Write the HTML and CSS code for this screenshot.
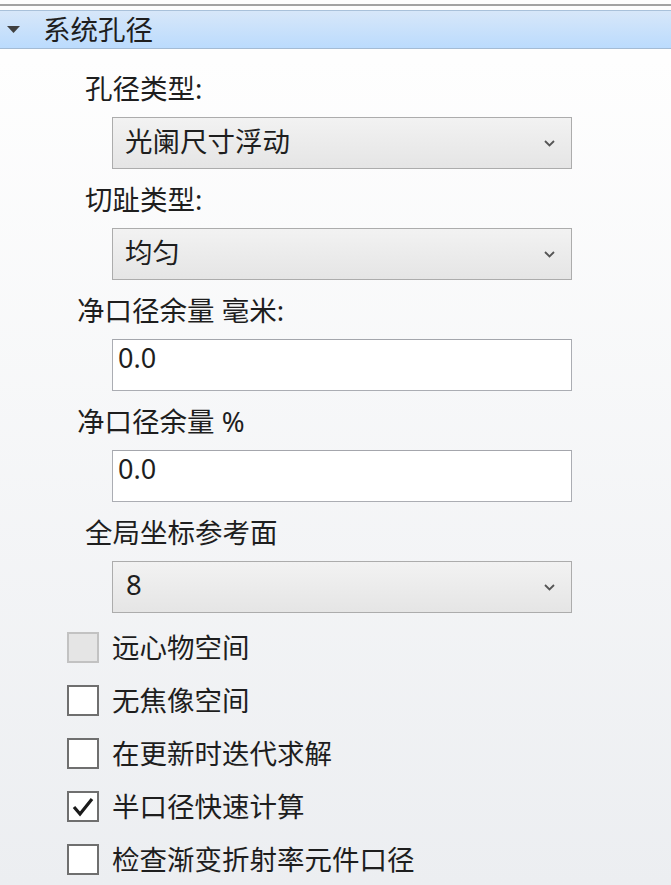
FILE: index.html
```html
<!DOCTYPE html>
<html lang="zh-CN">
<head>
  <meta charset="UTF-8">
  <meta name="viewport" content="width=device-width, initial-scale=1.0">
  <title>系统孔径</title>
  <link rel="stylesheet" href="styles.css">
</head>
<body>

  <div class="panel">
    <div class="rule"></div>

    <div class="section-head">
      <svg class="caret" width="13" height="7" viewBox="0 0 13 7"><path d="M0 0 H13 L6.5 7 Z" fill="#404040"/></svg>
      <span class="section-title">系统孔径</span>
    </div>

    <div class="fields">
      <div class="field">
        <div class="field-label indent">孔径类型:</div>
        <div class="dropdown">
          <span class="dropdown-text">光阑尺寸浮动</span>
          <svg class="chevron" width="11" height="7" viewBox="0 0 11 7"><path d="M1 1 L5.5 5.5 L10 1" fill="none" stroke="#555" stroke-width="1.8"/></svg>
        </div>
      </div>

      <div class="field">
        <div class="field-label indent">切趾类型:</div>
        <div class="dropdown">
          <span class="dropdown-text">均匀</span>
          <svg class="chevron" width="11" height="7" viewBox="0 0 11 7"><path d="M1 1 L5.5 5.5 L10 1" fill="none" stroke="#555" stroke-width="1.8"/></svg>
        </div>
      </div>

      <div class="field">
        <div class="field-label">净口径余量 毫米:</div>
        <input class="textbox" type="text" value="0.0">
      </div>

      <div class="field">
        <div class="field-label">净口径余量 %</div>
        <input class="textbox" type="text" value="0.0">
      </div>

      <div class="field">
        <div class="field-label indent">全局坐标参考面</div>
        <div class="dropdown">
          <span class="dropdown-text num">8</span>
          <svg class="chevron" width="11" height="7" viewBox="0 0 11 7"><path d="M1 1 L5.5 5.5 L10 1" fill="none" stroke="#555" stroke-width="1.8"/></svg>
        </div>
      </div>
    </div>

    <ul class="checks">
      <li class="check-row">
        <span class="box disabled"></span>
        <span class="check-text">远心物空间</span>
      </li>
      <li class="check-row">
        <span class="box"></span>
        <span class="check-text">无焦像空间</span>
      </li>
      <li class="check-row">
        <span class="box"></span>
        <span class="check-text">在更新时迭代求解</span>
      </li>
      <li class="check-row">
        <span class="box">
          <svg width="24" height="22" viewBox="0 0 24 22"><path d="M3 11 L9 18 L21 3" fill="none" stroke="#1a1a1a" stroke-width="3.2"/></svg>
        </span>
        <span class="check-text">半口径快速计算</span>
      </li>
      <li class="check-row">
        <span class="box"></span>
        <span class="check-text">检查渐变折射率元件口径</span>
      </li>
    </ul>
  </div>

</body>
</html>
```

FILE: styles.css
```css
body {
  margin: 0;
  font-family: 'Noto Sans', 'Noto Sans CJK SC', sans-serif;
  color: #1e1e1e;
  background: #fff;
}

.panel {
  width: 671px;
  height: 885px;
  overflow: hidden;
  padding-top: 4px;
  box-sizing: border-box;
  background: linear-gradient(#fefefe 60px, #eceef1);
}

.rule {
  height: 2px;
  background: #a3a3a3;
  margin-bottom: 4px;
}

.section-head {
  display: flex;
  align-items: center;
  height: 37px;
  border-top: 1px solid #a9c1da;
  border-bottom: 1px solid #a4bbd4;
  background: linear-gradient(#d7e7f9, #bbdbfd);
}

.caret {
  margin-left: 7px;
  margin-right: 23px;
}

.section-title {
  font-size: 27.5px;
  line-height: 1;
}

.fields {
  padding-top: 25px;
}

.field + .field {
  margin-top: 16px;
}

.field-label {
  font-size: 27.5px;
  line-height: 30px;
  height: 30px;
  margin-left: 77px;
  margin-bottom: 13px;
  white-space: nowrap;
}

.field-label.indent {
  margin-left: 85px;
}

.dropdown {
  display: flex;
  align-items: center;
  justify-content: space-between;
  margin-left: 112px;
  width: 460px;
  height: 52px;
  box-sizing: border-box;
  border: 1px solid #acacac;
  background: linear-gradient(#f2f2f2, #e5e5e5);
  padding: 0 16px 0 12px;
}

.dropdown-text {
  font-size: 27.5px;
  line-height: 1;
  margin-top: -2px;
}

.dropdown-text.num {
  margin-left: 1px;
  margin-top: -4px;
}

.textbox {
  display: block;
  margin: 0 0 0 112px;
  width: 460px;
  height: 52px;
  box-sizing: border-box;
  border: 1px solid #abadb3;
  border-top-color: #a4a6ac;
  background: #fff;
  font-family: inherit;
  font-size: 27px;
  color: #1e1e1e;
  padding: 0 5px 15px;
  outline: none;
}

.checks {
  list-style: none;
  margin: 8px 0 0;
  padding: 0;
}

.check-row {
  display: flex;
  align-items: center;
  height: 53px;
  padding-left: 67px;
}

.box {
  display: flex;
  align-items: center;
  justify-content: center;
  width: 32px;
  height: 31px;
  box-sizing: border-box;
  border: 2px solid #6f6f6f;
  background: #fff;
  margin-right: 13px;
}

.box.disabled {
  border-color: #c2c2c2;
  background: #e5e5e5;
}

.check-text {
  font-size: 27.5px;
  line-height: 1;
  white-space: nowrap;
}
```
